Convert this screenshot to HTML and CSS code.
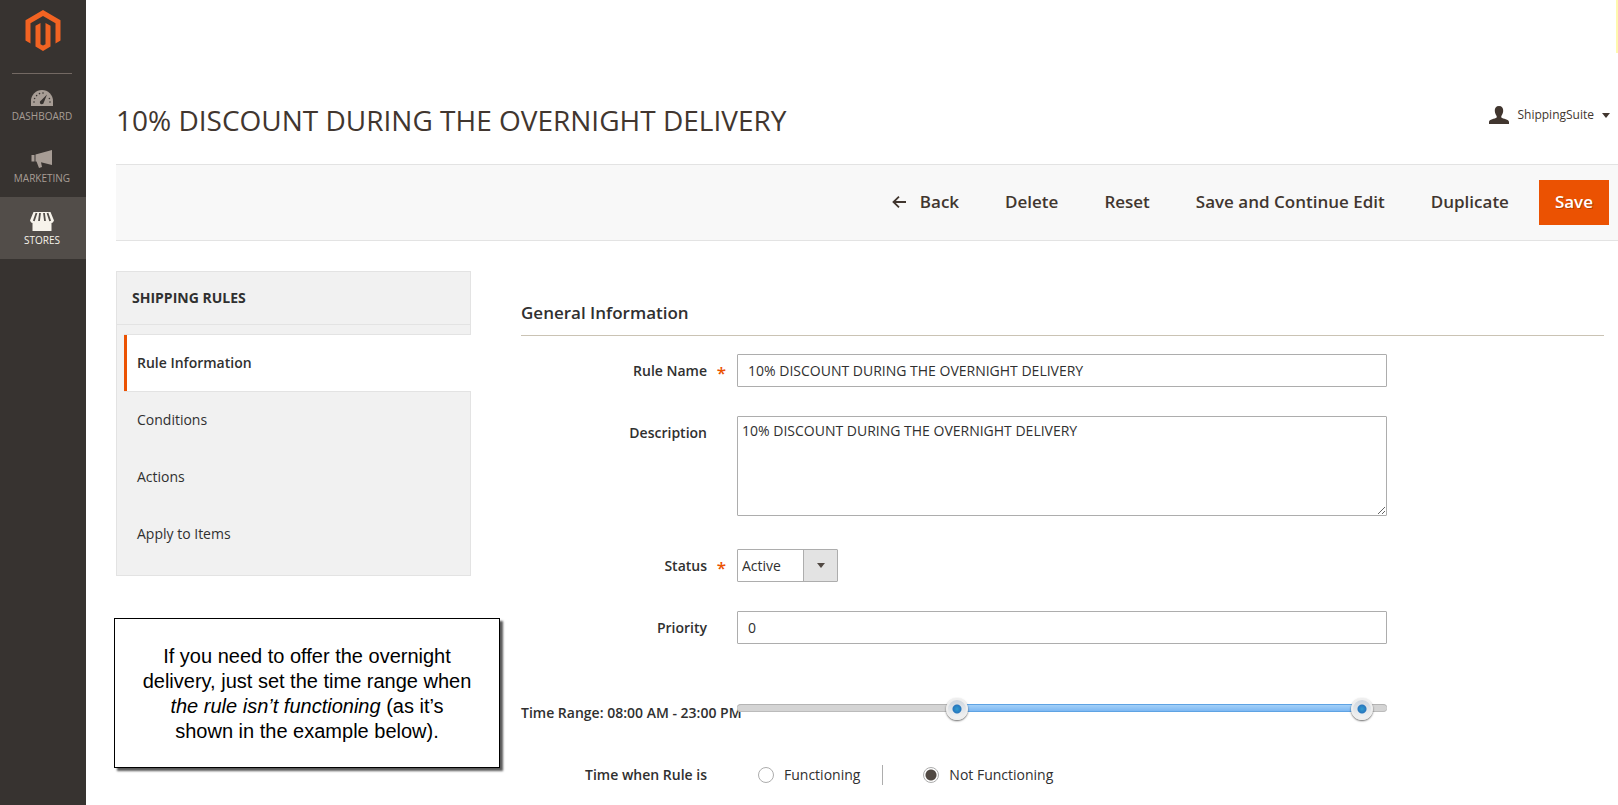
FILE: index.html
```html
<!DOCTYPE html>
<html lang="en">
<head>
<meta charset="utf-8">
<title>10% DISCOUNT DURING THE OVERNIGHT DELIVERY</title>
<link rel="stylesheet" href="styles.css">
</head>
<body>
<div class="page">
  <nav class="sidebar" aria-label="Main">
    <a class="logo" href="#" aria-label="Home">
      <svg width="36" height="41" viewBox="0 0 36 41" fill="#f26322" aria-hidden="true">
        <path d="M18 0 35.500 10.200V30.500L30.500 33.500V13.200L18 6 5.500 13.200V33.500L.500 30.500V10.200Z"/>
        <path d="M10.500 15.800 15.500 13V34.200L18 35.600 20.500 34.200V13L25.500 15.800V36.500L18 41 10.500 36.500Z"/>
      </svg>
    </a>
    <ul class="menu">
      <li><a class="menu-link" href="#">
        <svg width="22" height="16" viewBox="0 0 22 16" aria-hidden="true">
          <path fill="currentColor" d="M0 16V11a11 11 0 0 1 22 0V16Z"/>
          <g fill="#373330"><circle cx="3" cy="12" r=".8"/><circle cx="3.600" cy="8.500" r=".8"/><circle cx="5.600" cy="5.600" r=".8"/><circle cx="8.500" cy="3.600" r=".8"/><circle cx="12" cy="3" r=".8"/><circle cx="18.400" cy="8.500" r=".8"/><circle cx="19" cy="12" r=".8"/><path d="M16 4.500 12.800 12.500a2 2 0 1 1-2.800-2Z"/></g>
        </svg>
        <span>Dashboard</span></a></li>
      <li><a class="menu-link" href="#">
        <svg width="22" height="18" viewBox="0 0 22 18" fill="currentColor" aria-hidden="true">
          <path d="M.500 5H3.500V11.500H.500ZM4.500 4.500 21 0V15L10 12.200 11 17 8 18 5.500 11.500H4.500Z"/>
        </svg>
        <span>Marketing</span></a></li>
      <li><a class="menu-link menu-link-active" href="#" aria-current="page">
        <svg width="24" height="18" viewBox="0 0 24 18" aria-hidden="true">
          <path fill="currentColor" d="M3.500 0H20.500L24 8.500Q23 11 21.500 11V19H2.500V11Q1 11 0 8.500Z"/>
          <path d="M6.500 1 3.800 9M10 1 9 9M14 1 15 9M17.500 1 20.200 9" stroke="#524d49" stroke-width="1.800" fill="none"/>
        </svg>
        <span>Stores</span></a></li>
    </ul>
  </nav>

  <div class="main">
    <div class="edge-notice"></div>
    <header class="header">
      <h1 class="title">10% DISCOUNT DURING THE OVERNIGHT DELIVERY</h1>
      <button class="account" type="button">
        <svg width="20" height="18" viewBox="0 0 20 18" fill="#41362f" aria-hidden="true">
          <path d="M10 0C7 0 5.600 2 5.800 5 6 7.500 7 9 7.700 10V11.500C6 13 0 13 0 16V18H20V16C20 13 14 13 12.300 11.500V10C13 9 14 7.500 14.200 5 14.400 2 13 0 10 0Z"/>
        </svg>
        <span>ShippingSuite</span>
        <svg width="8" height="5" viewBox="0 0 8 5" fill="#41362f" aria-hidden="true"><path d="M0 0H8L4 5Z"/></svg>
      </button>
    </header>

    <div class="toolbar">
      <button class="action" type="button">
        <svg width="14" height="12" viewBox="0 0 14 12" fill="none" stroke="#41362f" stroke-width="1.800" aria-hidden="true"><path d="M14 6H1.500M7 .700 1.500 6 7 11.300"/></svg>
        Back</button>
      <button class="action" type="button">Delete</button>
      <button class="action" type="button">Reset</button>
      <button class="action" type="button">Save and Continue Edit</button>
      <button class="action" type="button">Duplicate</button>
      <button class="action action-primary" type="button">Save</button>
    </div>

    <div class="columns">
      <aside class="side">
        <section class="tabs">
          <h2 class="tabs-title">Shipping Rules</h2>
          <ul class="tabs-list">
            <li><a class="tab tab-active" href="#" aria-current="page">Rule Information</a></li>
            <li><a class="tab" href="#">Conditions</a></li>
            <li><a class="tab" href="#">Actions</a></li>
            <li><a class="tab" href="#">Apply to Items</a></li>
          </ul>
        </section>
        <p class="note">If you need to offer the overnight delivery, just set the time range when <em>the rule isn’t functioning</em> (as it’s shown in the example below).</p>
      </aside>

      <form class="form">
        <h2 class="form-title">General Information</h2>

        <div class="field">
          <label class="label required" for="name">Rule Name</label>
          <input class="control" id="name" type="text" value="10% DISCOUNT DURING THE OVERNIGHT DELIVERY">
        </div>
        <div class="field field-area">
          <label class="label" for="description">Description</label>
          <textarea class="control control-area" id="description">10% DISCOUNT DURING THE OVERNIGHT DELIVERY</textarea>
        </div>
        <div class="field">
          <label class="label required" for="status">Status</label>
          <div class="select">
            <select class="control select-control" id="status"><option>Active</option><option>Inactive</option></select>
            <svg class="select-arrow" width="8" height="5" viewBox="0 0 8 5" fill="#514943" aria-hidden="true"><path d="M0 0H8L4 5Z"/></svg>
          </div>
        </div>
        <div class="field">
          <label class="label" for="priority">Priority</label>
          <input class="control" id="priority" type="text" value="0">
        </div>
        <div class="field field-range">
          <div class="range-text"><label for="from">Time Range:</label> <output for="from to">08:00 AM - 23:00 PM</output></div>
          <div class="slider">
            <input class="slider-input" id="from" type="range" min="0" max="1440" value="480" aria-label="From">
            <input class="slider-input" id="to" type="range" min="0" max="1440" value="1408" aria-label="To">
          </div>
        </div>
        <div class="field field-radios" role="radiogroup" aria-labelledby="mode">
          <span class="label" id="mode">Time when Rule is</span>
          <div class="radios">
            <label class="radio"><input type="radio" name="mode"> Functioning</label>
            <label class="radio"><input type="radio" name="mode" checked> Not Functioning</label>
          </div>
        </div>
      </form>
    </div>
  </div>
</div>
</body>
</html>
```

FILE: styles.css
```css
* { box-sizing: border-box; }

body {
  margin: 0;
  background: #fff;
  color: #303030;
  font: 14px/20px "Open Sans", "Noto Sans", sans-serif;
}

h1, h2, ul, p { margin: 0; padding: 0; }
ul { list-style: none; }
a { color: inherit; text-decoration: none; }
button, input, textarea, select { font: inherit; color: inherit; }

.page {
  display: flex;
  min-height: 100vh;
}

/* Sidebar */
.sidebar {
  flex: 0 0 86px;
  background: #373330;
}

.logo {
  display: flex;
  justify-content: center;
  height: 73px;
  padding: 10px 0 0;
}

.menu {
  background: linear-gradient(#736963, #736963) 12px 0 / 60px 1px no-repeat;
}

.menu-link {
  display: flex;
  flex-direction: column;
  align-items: center;
  justify-content: flex-end;
  gap: 2px;
  height: 62px;
  padding: 0 2px 11px 0;
  color: #a79d95;
  font-size: 10px;
  line-height: 16px;
  text-transform: uppercase;
}

.menu-link-active {
  background: #524d49;
  color: #f7f3eb;
}

.menu-link svg { overflow: visible; }

/* Header */
.main {
  position: relative;
  flex: 1;
  min-width: 0;
  padding-left: 30px;
}

.edge-notice {
  position: absolute;
  top: 0;
  right: 0;
  width: 2px;
  height: 53px;
  background: #fff8ae;
}

.header {
  display: flex;
  justify-content: space-between;
  align-items: flex-start;
  padding: 100px 8px 24px 0;
}

.title {
  color: #41362f;
  font-size: 28px;
  font-weight: 400;
  line-height: 40px;
}

.account {
  display: flex;
  align-items: center;
  gap: 8px;
  padding: 5px 0;
  border: 0;
  background: none;
  color: #41362f;
  font-size: 12px;
}

/* Toolbar */
.toolbar {
  display: flex;
  justify-content: flex-end;
  align-items: center;
  gap: 14px;
  padding: 15px 9px 15px 0;
  border: solid #e3e3e3;
  border-width: 1px 0;
  background: #f8f8f8;
}

.action {
  display: flex;
  align-items: center;
  gap: 14px;
  height: 45px;
  padding: 0 16px 2px;
  border: 0;
  background: none;
  color: #41362f;
  font-size: 17px;
  font-weight: 600;
}

.action-primary {
  background: #eb5202;
  color: #fff;
  text-shadow: 1px 1px 0 rgba(0, 0, 0, 0.25);
}

/* Left column */
.columns {
  display: grid;
  grid-template-columns: 355px 1fr;
  gap: 50px;
  padding: 30px 14px 0 0;
}

.tabs {
  border: 1px solid #e3e3e3;
  background: #f1f1f1;
}

.tabs-title {
  padding: 16px 15px;
  border-bottom: 1px solid #e3e3e3;
  font-size: 14px;
  font-weight: 700;
  text-transform: uppercase;
}

.tabs-list {
  margin-right: -1px;
  padding: 9px 0 12px 7px;
}

.tab {
  display: block;
  padding: 18px 13px 19px;
}

.tab-active {
  padding: 18px 13px;
  border: solid #e3e3e3;
  border-width: 1px 0;
  background: #fff;
  box-shadow: inset 3px 0 #eb5202;
  font-weight: 600;
}

.note {
  width: 386px;
  margin: 42px 0 0 -2px;
  padding: 25px 24px 23px;
  border: 1px solid #000;
  background: #fff;
  box-shadow: 3px 3px 2px rgba(0, 0, 0, 0.65);
  color: #000;
  font: 20px/25px "Liberation Sans", Arial, sans-serif;
  text-align: center;
}

/* Form */
.form-title {
  margin-bottom: 18px;
  padding: 30px 0 10px;
  border-bottom: 1px solid #cac3b4;
  font-size: 17px;
  font-weight: 600;
  line-height: 24px;
}

.field {
  display: grid;
  grid-template-columns: 216px 60%;
  align-items: start;
  margin-bottom: 29px;
}

.field-area { margin-bottom: 33px; }

.label {
  position: relative;
  padding: 7px 30px 0 0;
  font-weight: 600;
  text-align: right;
}

.required::after {
  content: "*";
  position: absolute;
  right: 11px;
  top: 9px;
  color: #eb5202;
  font-size: 17px;
}

.control {
  width: 100%;
  height: 33px;
  padding: 0 10px;
  border: 1px solid #adadad;
  border-radius: 1px;
  background: #fff;
}

.control-area {
  display: block;
  height: 100px;
  padding: 4px;
  resize: vertical;
}

.select {
  position: relative;
  width: 101px;
}

.select-control {
  appearance: none;
  display: block;
  padding: 0 4px;
  background: linear-gradient(to left, #e3e3e3 33px, #adadad 33px, #adadad 34px, #fff 34px);
}

.select-arrow {
  position: absolute;
  right: 13px;
  top: 14px;
  pointer-events: none;
}

/* Time range slider */
.field-range {
  margin: 58px 0 42px;
}

.range-text {
  padding-top: 1px;
  font-weight: 600;
  white-space: nowrap;
}

.slider {
  position: relative;
  height: 8px;
  margin-top: 2px;
  border-radius: 4px;
  background: #d4d4d4;
  box-shadow: inset 0 1px #b4b4b4, inset 0 -1px #bbb;
}

.slider::before {
  content: "";
  position: absolute;
  inset: 0 4% 0 34%;
  border: solid #5fa3e3;
  border-width: 1px 0;
  background: linear-gradient(#a3d0f8, #7db8f3);
}

.slider-input {
  appearance: none;
  position: absolute;
  top: -6px;
  left: 0;
  width: 100%;
  height: 22px;
  margin: 0;
  background: none;
  pointer-events: none;
}

.slider-input::-webkit-slider-thumb {
  appearance: none;
  width: 22px;
  height: 22px;
  border: 2px solid #eee;
  border-radius: 50%;
  background: radial-gradient(circle at 50% 50%, #2f9bd0 0, #2877be 4px, transparent 5px), linear-gradient(#ced6df, #f2f2f2);
  box-shadow: 0 1px 2px rgba(0, 0, 0, 0.6);
  pointer-events: auto;
}

/* Radios */
.field-radios .label { padding-top: 0; }

.radios {
  display: flex;
  align-items: center;
  padding-left: 21px;
}

.radio {
  display: flex;
  align-items: center;
  gap: 10px;
}

.radio + .radio {
  margin-left: 22px;
  padding-left: 40px;
  border-left: 1px solid #adadad;
}

.radio input {
  appearance: none;
  width: 16px;
  height: 16px;
  margin: 0;
  border: 1px solid #adadad;
  border-radius: 50%;
  background: #fff;
}

.radio input:checked {
  background: radial-gradient(circle, #514943 5px, #fff 6px);
}
```
